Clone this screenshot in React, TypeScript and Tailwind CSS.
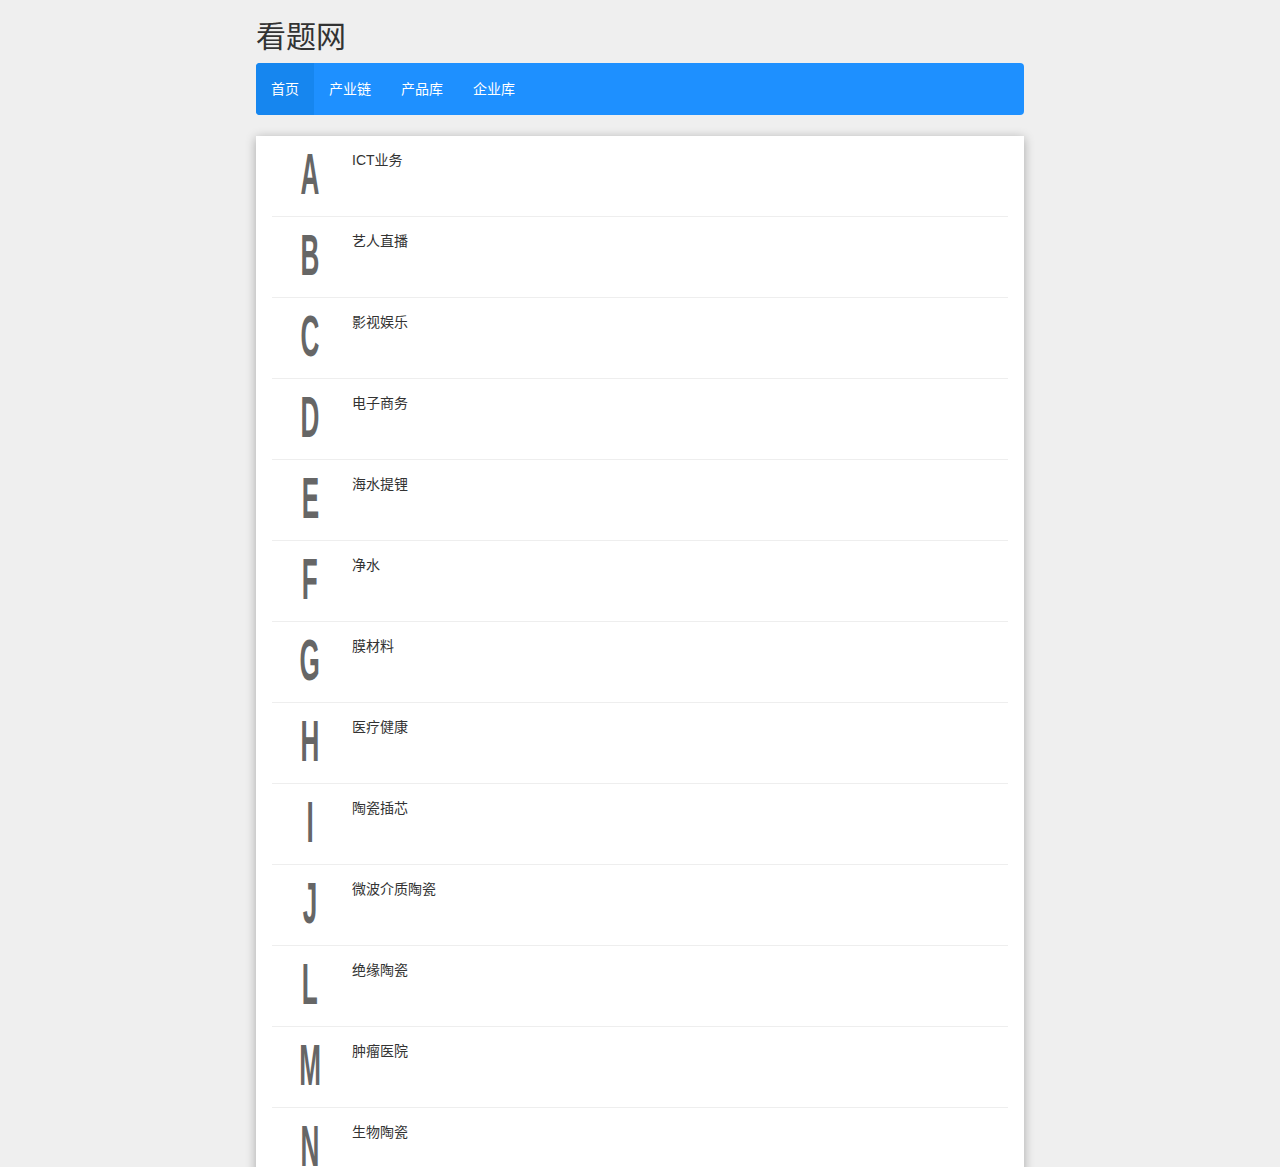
const navItems = ['首页', '产业链', '产品库', '企业库'];

const categories: [string, string][] = [
  ['A', 'ICT业务'],
  ['B', '艺人直播'],
  ['C', '影视娱乐'],
  ['D', '电子商务'],
  ['E', '海水提锂'],
  ['F', '净水'],
  ['G', '膜材料'],
  ['H', '医疗健康'],
  ['I', '陶瓷插芯'],
  ['J', '微波介质陶瓷'],
  ['L', '绝缘陶瓷'],
  ['M', '肿瘤医院'],
  ['N', '生物陶瓷'],
];

export default function App() {
  return (
    <div
      className="min-h-screen bg-[#efefef] text-[#333]"
      style={{ fontFamily: '"Liberation Sans", "Noto Sans CJK SC", sans-serif' }}
    >
      <div className="mx-auto w-[768px]">
        <h1 className="pt-[19px] pb-[8px] text-[30px] leading-[36px] font-normal text-[#333]">看题网</h1>

        <nav className="flex h-[52px] overflow-hidden rounded-[4px] bg-[#1e90ff]">
          {navItems.map((item, i) => (
            <a
              key={item}
              href="#"
              className={`flex items-center px-[15px] text-[14px] text-white ${i === 0 ? 'bg-[#1686ef]' : ''}`}
            >
              {item}
            </a>
          ))}
        </nav>

        <div className="mt-[21px] bg-white px-4 shadow-[0_2px_10px_rgba(0,0,0,0.3)]">
          {categories.map(([letter, name]) => (
            <div key={letter} className="flex h-[81px] border-b border-[#eeeeee] pt-[9px]">
              <div className="w-[76px] text-center">
                <span className="inline-block scale-x-[0.45] text-[58px] leading-none font-bold text-[#666]">
                  {letter}
                </span>
              </div>
              <div className="mt-[5px] pl-[4px] text-[14px] leading-[20px] text-[#333]">{name}</div>
            </div>
          ))}
        </div>
      </div>
    </div>
  );
}
